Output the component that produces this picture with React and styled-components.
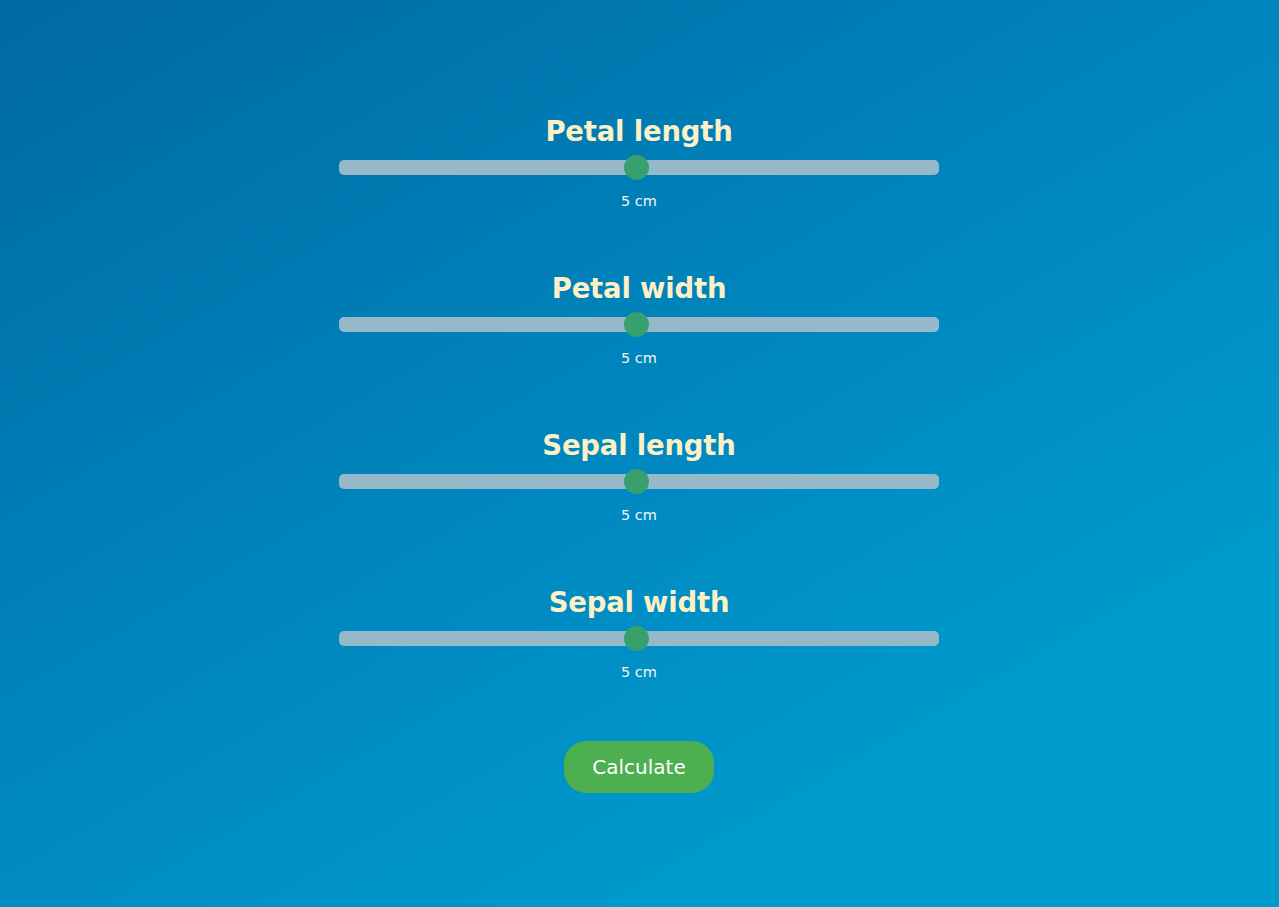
import React from 'react'
import styled, { createGlobalStyle } from 'styled-components'

const GlobalStyle = createGlobalStyle`
  html, body {
    margin: 0;
    padding: 0;
  }
  body {
    font-family: "DejaVu Sans", "Liberation Sans", sans-serif;
  }
`

const fields = [
  { label: 'Petal length', value: 5 },
  { label: 'Petal width', value: 5 },
  { label: 'Sepal length', value: 5 },
  { label: 'Sepal width', value: 5 },
]

function Slider({ value, max = 10 }) {
  const pct = (value / max) * 100
  return (
    <Track>
      <Thumb style={{ left: `calc(${pct}% - 15.5px)` }} />
    </Track>
  )
}

export default function App() {
  return (
    <Page>
      <GlobalStyle />
      <Form>
        {fields.map((f) => (
          <Field key={f.label}>
            <Title>{f.label}</Title>
            <Slider value={f.value} />
            <Value>{f.value} cm</Value>
          </Field>
        ))}
        <Button>Calculate</Button>
      </Form>
    </Page>
  )
}

const Page = styled.div`
  min-height: 907px;
  padding-right: 1px;
  background: linear-gradient(150deg, #0069a2 0%, #0088c0 50%, #009bcd 80%, #009bcd 100%);
  display: flex;
  justify-content: center;
`

const Form = styled.div`
  width: 600px;
  padding-top: 113px;
  display: flex;
  flex-direction: column;
  align-items: center;
  gap: 60px;
`

const Field = styled.div`
  width: 100%;
  display: flex;
  flex-direction: column;
  align-items: center;
`

const Title = styled.h2`
  margin: 0;
  font-size: 27.5px;
  line-height: 36px;
  font-weight: 700;
  color: #fcf0c6;
  letter-spacing: -0.2px;
`

const Track = styled.div`
  position: relative;
  width: 100%;
  height: 15px;
  margin-top: 11px;
  border-radius: 5px;
  background: #95b9c9;
`

const Thumb = styled.div`
  position: absolute;
  top: -5px;
  width: 25px;
  height: 25px;
  border-radius: 50%;
  background: #38a06c;
`

const Value = styled.div`
  margin-top: 17px;
  font-size: 14.5px;
  line-height: 18px;
  color: #f4f4f0;
`

const Button = styled.button`
  width: 150px;
  height: 52px;
  border: none;
  border-radius: 22px;
  background: #4caf50;
  color: #ffffff;
  font-family: "DejaVu Sans", "Liberation Sans", sans-serif;
  font-size: 20px;
  cursor: pointer;
`
